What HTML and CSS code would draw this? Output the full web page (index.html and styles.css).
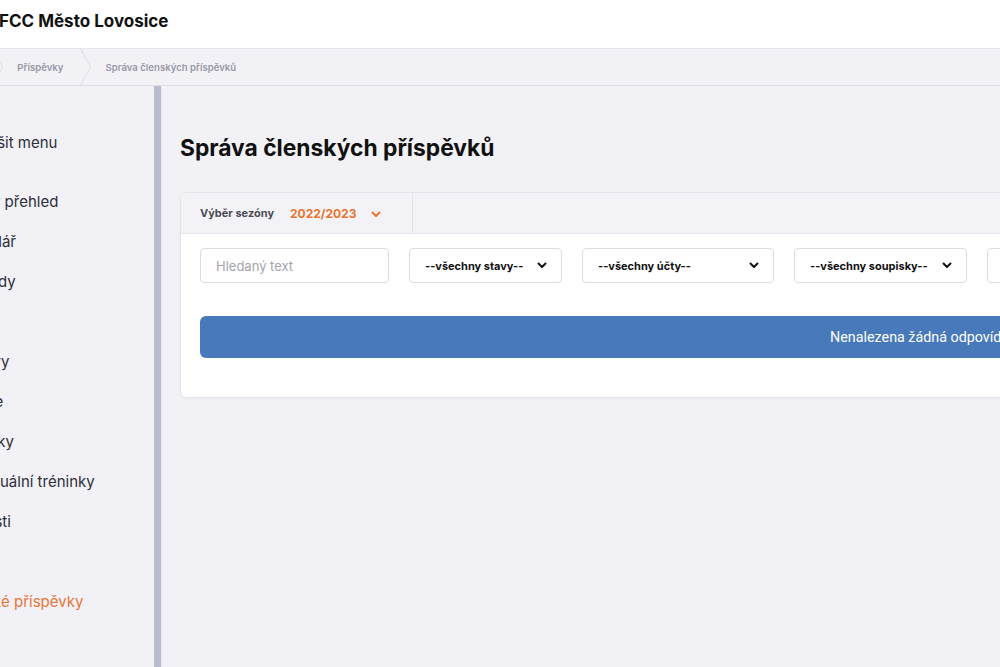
FILE: index.html
```html
<!DOCTYPE html>
<html lang="cs">
<head>
<meta charset="utf-8">
<title>Správa členských příspěvků</title>
<link rel="stylesheet" href="styles.css">
</head>
<body>
<div class="app">
  <header class="topbar">
    <span class="brand">FCC Město Lovosice</span>
  </header>
  <nav class="crumbs">
    <span class="crumb first">Domů</span>
    <svg class="sep" width="11" height="36" viewBox="0 0 11 36"><polyline points="0.5,0 10.5,18 0.5,36" fill="none" stroke="#dcdce3" stroke-width="1"/></svg>
    <span class="crumb">Příspěvky</span>
    <svg class="sep" width="11" height="36" viewBox="0 0 11 36"><polyline points="0.5,0 10.5,18 0.5,36" fill="none" stroke="#dcdce3" stroke-width="1"/></svg>
    <span class="crumb">Správa členských příspěvků</span>
  </nav>
  <div class="layout">
    <aside class="sidebar">
      <div class="item toggle">Zmenšit menu</div>
      <div class="item">Rychlý přehled</div>
      <div class="item">Kalendář</div>
      <div class="item">Přehledy</div>
      <div class="item">Hráči</div>
      <div class="item">Sestavy</div>
      <div class="item">Galerie</div>
      <div class="item">Tréninky</div>
      <div class="item">Individuální tréninky</div>
      <div class="item">Události</div>
      <div class="item">Účty</div>
      <div class="item active">Členské příspěvky</div>
    </aside>
    <main class="main">
      <h1 class="title">Správa členských příspěvků</h1>
      <section class="card">
        <div class="card-head">
          <div class="season">
            <span class="season-label">Výběr sezóny</span>
            <span class="season-value">2022/2023</span>
            <svg class="season-chev" width="10" height="7" viewBox="0 0 10 7"><polyline points="1.5,1.5 5,5 8.5,1.5" fill="none" stroke="#e8742f" stroke-width="2" stroke-linecap="round" stroke-linejoin="round"/></svg>
          </div>
        </div>
        <div class="card-body">
          <div class="filters">
            <div class="field search">Hledaný text</div>
            <div class="field select w-stavy"><span>--všechny stavy--</span><svg width="10" height="7" viewBox="0 0 10 7"><polyline points="1.5,1.5 5,5 8.5,1.5" fill="none" stroke="#111" stroke-width="2" stroke-linecap="round" stroke-linejoin="round"/></svg></div>
            <div class="field select w-ucty"><span>--všechny účty--</span><svg width="10" height="7" viewBox="0 0 10 7"><polyline points="1.5,1.5 5,5 8.5,1.5" fill="none" stroke="#111" stroke-width="2" stroke-linecap="round" stroke-linejoin="round"/></svg></div>
            <div class="field select w-soupisky"><span>--všechny soupisky--</span><svg width="10" height="7" viewBox="0 0 10 7"><polyline points="1.5,1.5 5,5 8.5,1.5" fill="none" stroke="#111" stroke-width="2" stroke-linecap="round" stroke-linejoin="round"/></svg></div>
            <div class="field select w-other"><span>Bez ohledu na splatnost</span><svg width="10" height="7" viewBox="0 0 10 7"><polyline points="1.5,1.5 5,5 8.5,1.5" fill="none" stroke="#111" stroke-width="2" stroke-linecap="round" stroke-linejoin="round"/></svg></div>
          </div>
          <div class="notice">Nenalezena žádná odpovídající data</div>
        </div>
      </section>
    </main>
  </div>
</div>
</body>
</html>
```
FILE: styles.css
```css
html, body {
  margin: 0;
  padding: 0;
  height: 100%;
  overflow: hidden;
  background: #f2f2f6;
}
body {
  font-family: Inter, "Noto Sans", sans-serif;
  color: #222;
}
.app {
  margin-left: -67px;
  width: 2000px;
  height: 100%;
  display: flex;
  flex-direction: column;
}
.topbar {
  height: 48px;
  background: #fff;
  border-bottom: 1px solid #e6e6ec;
  display: flex;
  align-items: center;
  padding-left: 66px;
  flex-shrink: 0;
}
.brand {
  font-size: 17px;
  font-weight: 700;
  color: #111;
  margin-top: -6px;
}
.crumbs {
  height: 36px;
  background: #f2f2f6;
  border-bottom: 1px solid #dedee5;
  display: flex;
  align-items: center;
  padding-left: 15px;
  flex-shrink: 0;
}
.crumb {
  font-size: 9.6px;
  font-weight: 600;
  color: #9898a6;
  padding: 0 17px 0 14px;
}
.crumb.first { padding-left: 0; }
.sep { display: block; }
.layout {
  flex: 1;
  display: flex;
  min-height: 0;
}
.sidebar {
  width: 221px;
  border-right: 7px solid #babbcc;
  padding-top: 37px;
  flex-shrink: 0;
  background: #f2f2f6;
}
.item {
  height: 40px;
  line-height: 40px;
  font-size: 15px;
  color: #2e2e36;
  padding-left: 20px;
  white-space: nowrap;
}
.item.toggle { margin-bottom: 19px; padding-left: 24px; }
.item.active { color: #e8743a; }
.main {
  flex: 1;
  border-left: 1px solid #e9e9ef;
  padding: 0 18px;
  background: #f2f2f6;
}
.title {
  font-size: 22.8px;
  font-weight: 700;
  color: #111;
  margin: 48px 0 30px 0;
  line-height: 28px;
}
.card {
  width: 1527px;
  background: #fff;
  border: 1px solid #e3e3ea;
  border-radius: 6px;
  box-shadow: 0 1px 3px rgba(0,0,0,0.04);
  overflow: hidden;
}
.card-head {
  height: 40px;
  background: #f3f3f7;
  border-bottom: 1px solid #e3e3ea;
  display: flex;
}
.season {
  width: 212px;
  padding-left: 19px;
  border-right: 1px solid #e3e3ea;
  display: flex;
  align-items: center;
}
.season-label {
  font-size: 11px;
  font-weight: 700;
  color: #4c4c56;
}
.season-value {
  font-size: 12px;
  font-weight: 700;
  color: #e8742f;
  margin-left: 16px;
}
.season-chev { margin-left: 15px; margin-top: 2px; }
.card-body {
  padding: 14px 19px 39px 19px;
}
.filters {
  display: flex;
  gap: 20px;
}
.field {
  height: 35px;
  box-sizing: border-box;
  border: 1px solid #dcdce3;
  border-radius: 4px;
  display: flex;
  align-items: center;
  padding: 0 15px;
  background: #fff;
}
.search {
  width: 189px;
  font-size: 13px;
  color: #a4a4ae;
}
.select {
  justify-content: space-between;
  font-size: 11px;
  font-weight: 700;
  color: #111;
  padding-right: 14px;
}
.w-stavy { width: 153px; }
.w-ucty { width: 192px; }
.w-soupisky { width: 173px; }
.w-other { width: 200px; }
.notice {
  margin-top: 33px;
  height: 42px;
  border-radius: 6px;
  background: #4779bb;
  color: #fff;
  font-family: Roboto, "Liberation Sans", sans-serif;
  font-size: 14.3px;
  display: flex;
  align-items: center;
  justify-content: center;
}
```
